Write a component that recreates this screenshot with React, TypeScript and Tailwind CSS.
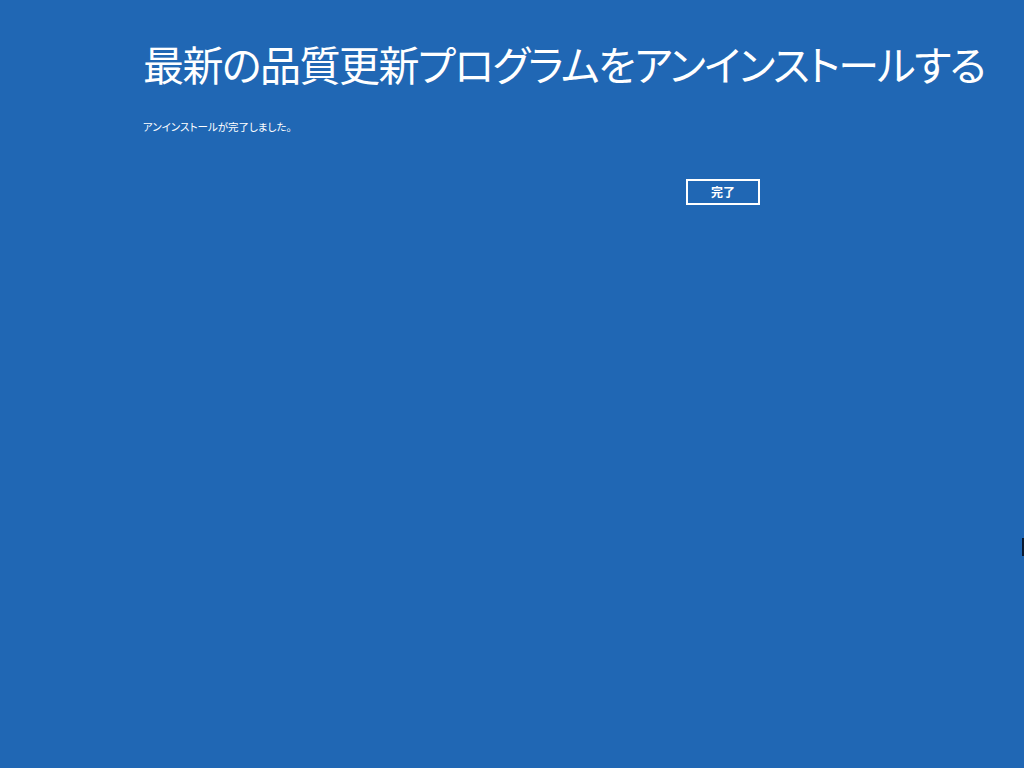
import React from "react";

export default function App() {
  const jp = { fontFamily: '"Noto Sans CJK JP", "Noto Sans", sans-serif' };
  return (
    <div className="relative w-[1024px] h-[768px] bg-[#2067b4] text-white overflow-hidden" style={jp}>
      <div className="pl-[143px] pt-[39px]">
        <h1 className="text-[41px] leading-[49px] font-normal whitespace-nowrap tracking-[-1.5px] [font-feature-settings:'palt']">
          最新の品質更新プログラムをアンインストールする
        </h1>
        <p className="mt-[32px] text-[10.5px] leading-[14px] whitespace-nowrap [font-feature-settings:'palt']">
          アンインストールが完了しました。
        </p>
        <div className="mt-[45px] pl-[543px]">
          <button className="w-[74px] h-[26px] border-2 border-white text-[12px] font-bold leading-none flex items-center justify-center">
            完了
          </button>
        </div>
      </div>
      <div className="absolute left-[1022px] top-[538px] w-[2px] h-[18px] bg-[#0a1a33]" />
    </div>
  );
}
